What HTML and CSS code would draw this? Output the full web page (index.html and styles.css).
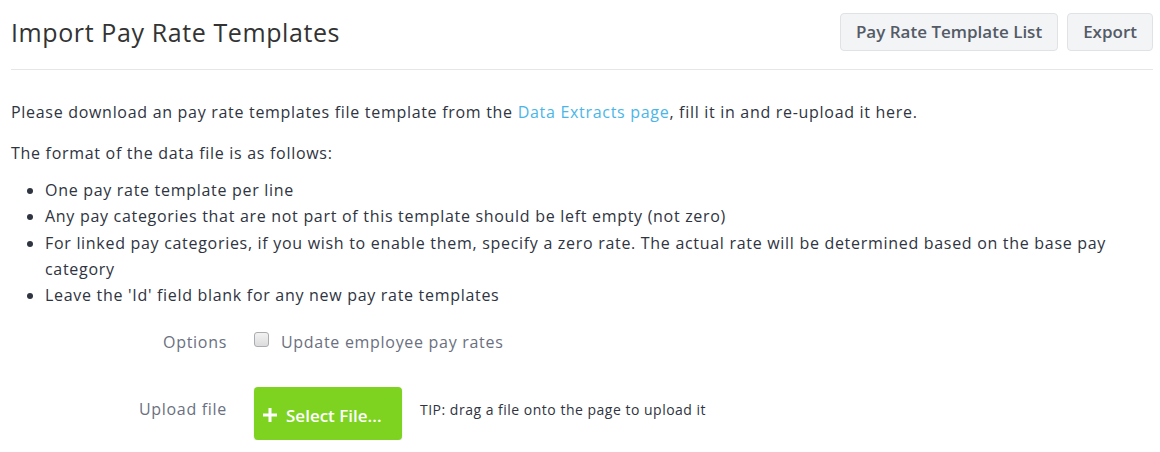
FILE: index.html
```html
<!DOCTYPE html>
<html lang="en">
<head>
    <meta charset="UTF-8">
    <meta name="viewport" content="width=device-width, initial-scale=1.0">
    <title>Import Pay Rate Templates</title>
    <link rel="stylesheet" href="styles.css">
</head>
<body>
    <div class="page">
        <div class="page-header">
            <h1>Import Pay Rate Templates</h1>
            <div class="header-actions">
                <a href="#" class="btn">Pay Rate Template List</a>
                <a href="#" class="btn">Export</a>
            </div>
        </div>

        <p>Please download an pay rate templates file template from the <a href="#" class="link">Data Extracts page</a>, fill it in and re-upload it here.</p>
        <p>The format of the data file is as follows:</p>
        <ul class="rules">
            <li>One pay rate template per line</li>
            <li>Any pay categories that are not part of this template should be left empty (not zero)</li>
            <li>For linked pay categories, if you wish to enable them, specify a zero rate. The actual rate will be determined based on the base pay category</li>
            <li>Leave the 'Id' field blank for any new pay rate templates</li>
        </ul>

        <form class="import-form">
            <div class="form-row">
                <label class="form-label">Options</label>
                <div class="form-field">
                    <label class="check"><input type="checkbox"> Update employee pay rates</label>
                </div>
            </div>
            <div class="form-row upload-row">
                <label class="form-label">Upload file</label>
                <div class="form-field">
                    <button type="button" class="btn-upload">
                        <svg width="14" height="14" viewBox="0 0 14 14"><path d="M5.5 0h3v5.5H14v3H8.5V14h-3V8.5H0v-3h5.5z" fill="#fff"/></svg>
                        Select File...
                    </button>
                    <span class="tip">TIP: drag a file onto the page to upload it</span>
                </div>
            </div>
        </form>
    </div>
</body>
</html>
```

FILE: styles.css
```css
body {
    font-family: "Open Sans", Arial, sans-serif;
    margin: 0;
    padding: 0;
    background-color: #fff;
    color: #2f3441;
    font-size: 16px;
    letter-spacing: 0.7px;
}
.page {
    padding: 0 7px 0 11px;
}
.page-header {
    display: flex;
    justify-content: space-between;
    align-items: center;
    height: 70px;
    border-bottom: 1px solid #e4e6e8;
    box-sizing: border-box;
    padding-bottom: 6px;
}
h1 {
    font-size: 25px;
    font-weight: 400;
    letter-spacing: 0.6px;
    margin: 0;
    color: #333;
}
.header-actions {
    display: flex;
    gap: 9px;
}
.btn {
    display: inline-block;
    height: 38px;
    line-height: 36px;
    padding: 0 15px;
    box-sizing: border-box;
    background-color: #f3f4f6;
    border: 1px solid #e0e2e5;
    border-radius: 4px;
    color: #545b66;
    font-size: 17px;
    font-weight: 600;
    letter-spacing: 0;
    text-decoration: none;
}
p {
    margin: 29px 0 0;
    line-height: 26px;
}
p + p {
    margin-top: 15px;
}
.link {
    color: #4ab6e8;
    text-decoration: none;
}
.rules {
    margin: 11px 0 0;
    padding-left: 34px;
    line-height: 26.3px;
}
.import-form {
    margin-top: 23px;
}
.form-row {
    display: flex;
    align-items: center;
}
.form-label {
    width: 243px;
    text-align: right;
    color: #6b7080;
    font-size: 16px;
    padding-right: 27px;
    box-sizing: border-box;
}
.form-field {
    display: flex;
    align-items: center;
}
.check {
    display: flex;
    align-items: center;
    gap: 12px;
    color: #6b7080;
    font-size: 16px;
}
.check input {
    appearance: none;
    width: 15px;
    height: 15px;
    margin: -6px 0 0;
    border: 1px solid #a9acb1;
    border-radius: 3px;
    background: linear-gradient(#f2f2f2, #dcdcdc);
}
.upload-row {
    margin-top: 34px;
    align-items: flex-start;
}
.upload-row .form-label {
    padding-top: 11px;
}
.btn-upload {
    display: flex;
    align-items: center;
    gap: 9px;
    height: 53px;
    width: 148px;
    padding: 3px 0 0 9px;
    background-color: #7ed321;
    border: none;
    border-radius: 4px;
    box-shadow: 0 1px 2px rgba(0, 0, 0, 0.15);
    color: #fff;
    font-family: "Open Sans", Arial, sans-serif;
    font-size: 17px;
    font-weight: 600;
    letter-spacing: 0;
    cursor: pointer;
}
.tip {
    margin-left: 18px;
    font-size: 14px;
    letter-spacing: 0.5px;
    color: #2f3441;
    margin-top: -8px;
}
```
